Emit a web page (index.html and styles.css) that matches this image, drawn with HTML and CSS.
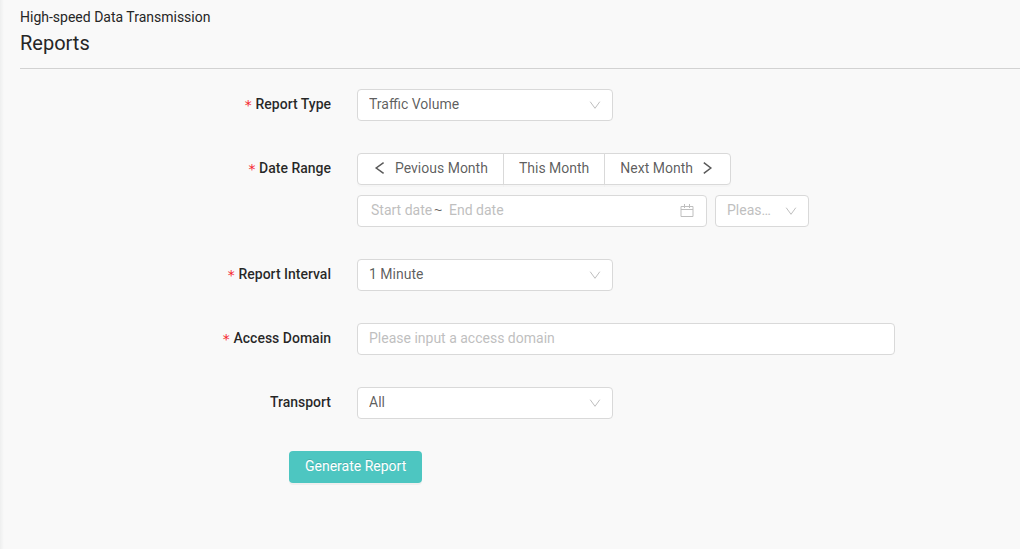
FILE: index.html
```html
<!DOCTYPE html>
<html lang="en">
<head>
<meta charset="utf-8">
<meta name="viewport" content="width=device-width, initial-scale=1">
<title>Reports</title>
<link rel="stylesheet" href="styles.css">
</head>
<body>
<main class="page">
  <header class="page-header">
    <p class="section">High-speed Data Transmission</p>
    <h1 class="title">Reports</h1>
  </header>
  <form class="form">
    <div class="row">
      <label class="label required" for="type">Report Type</label>
      <div class="field">
        <div class="select">
          <select id="type" class="control"><option>Traffic Volume</option></select>
          <svg class="arrow" viewBox="0 0 12 12" aria-hidden="true"><path d="M1.2 1.7 6 8.3l4.8-6.6"/></svg>
        </div>
      </div>
    </div>
    <div class="row">
      <label class="label required" for="start">Date Range</label>
      <div class="field date-field">
        <div class="months">
          <button type="button" class="month"><svg class="chevron" viewBox="0 0 14 14" aria-hidden="true"><path d="M10.6 1.6 3.2 7l7.4 5.4"/></svg>Pevious Month</button>
          <button type="button" class="month">This Month</button>
          <button type="button" class="month">Next Month<svg class="chevron" viewBox="0 0 14 14" aria-hidden="true"><path d="M2.8 1.6 9.8 7l-7 5.4"/></svg></button>
        </div>
        <div class="range-row">
          <div class="control range">
            <input id="start" class="date start" type="text" placeholder="Start date">
            <span class="tilde">~</span>
            <input class="date end" type="text" placeholder="End date" aria-label="End date">
            <svg class="calendar" viewBox="0 0 14 14" aria-hidden="true"><path d="M1 3.5h12v10H1zM1 6.5h12M4.5 1v4M9.5 1v4"/></svg>
          </div>
          <div class="select small">
            <select class="control placeholder" aria-label="Time zone"><option>Please select</option></select>
            <svg class="arrow" viewBox="0 0 12 12" aria-hidden="true"><path d="M1.2 1.7 6 8.3l4.8-6.6"/></svg>
          </div>
        </div>
      </div>
    </div>
    <div class="row">
      <label class="label required" for="interval">Report Interval</label>
      <div class="field">
        <div class="select">
          <select id="interval" class="control"><option>1 Minute</option></select>
          <svg class="arrow" viewBox="0 0 12 12" aria-hidden="true"><path d="M1.2 1.7 6 8.3l4.8-6.6"/></svg>
        </div>
      </div>
    </div>
    <div class="row">
      <label class="label required" for="domain">Access Domain</label>
      <div class="field"><input id="domain" class="control" type="text" placeholder="Please input a access domain"></div>
    </div>
    <div class="row">
      <label class="label" for="transport">Transport</label>
      <div class="field">
        <div class="select">
          <select id="transport" class="control"><option>All</option></select>
          <svg class="arrow" viewBox="0 0 12 12" aria-hidden="true"><path d="M1.2 1.7 6 8.3l4.8-6.6"/></svg>
        </div>
      </div>
    </div>
    <div class="actions"><button type="submit" class="submit">Generate Report</button></div>
  </form>
</main>
</body>
</html>
```

FILE: styles.css
```css
* { box-sizing: border-box; }
body {
  margin: 0;
  background: #f9f9f9;
  color: rgba(0, 0, 0, 0.65);
  font: 14px/20px Roboto, "Liberation Sans", sans-serif;
}
.page {
  min-height: 100vh;
  padding: 7px 0 32px 20px;
  background: linear-gradient(to right, #eeefef, #f9f9f9 4px);
}
.page-header {
  padding-bottom: 8px;
  border-bottom: 1px solid #d2d2d2;
  color: #262626;
}
.section { margin: 0; }
.title { margin: 0; font-size: 20px; font-weight: 400; line-height: 33px; }
.form { display: grid; gap: 32px; padding-top: 20px; }
.row { display: grid; grid-template-columns: 337fr 538fr 125fr; }
.label {
  padding-right: 26px;
  color: rgba(0, 0, 0, 0.85);
  font-weight: 500;
  line-height: 30px;
  text-align: right;
}
.required::before {
  content: "*";
  display: inline-block;
  margin-right: 3px;
  color: #f5222d;
  font: 14px/16px "DejaVu Sans Mono", monospace;
  vertical-align: -1px;
}
.control {
  display: block;
  width: 100%;
  height: 32px;
  margin: 0;
  padding: 0 11px 2px;
  border: 1px solid #d9d9d9;
  border-radius: 4px;
  background: #fff;
  color: rgba(0, 0, 0, 0.65);
  font: inherit;
  appearance: none;
}
::placeholder { color: #bfbfbf; opacity: 1; }
.select { position: relative; width: 256px; max-width: 100%; }
.select .control { padding-right: 36px; text-overflow: ellipsis; }
.select .placeholder { color: #bfbfbf; }
.small { width: 94px; }
.arrow {
  position: absolute;
  top: 11px;
  right: 12px;
  width: 12px;
  height: 12px;
  fill: none;
  stroke: #bfbfbf;
  pointer-events: none;
}
.date-field { display: grid; gap: 10px; }
.months { display: flex; }
.month {
  display: flex;
  align-items: center;
  gap: 8px;
  height: 32px;
  margin: 0 0 0 -1px;
  padding: 0 15px 2px;
  border: 1px solid #d9d9d9;
  background: #fff;
  box-shadow: 0 2px 0 rgba(0, 0, 0, 0.016);
  color: rgba(0, 0, 0, 0.65);
  font: inherit;
  white-space: nowrap;
}
.month:first-child { margin-left: 0; border-radius: 4px 0 0 4px; }
.month:last-child { border-radius: 0 4px 4px 0; }
.chevron { width: 14px; height: 14px; fill: none; stroke: #595959; stroke-width: 1.5; }
.range-row { display: flex; gap: 8px; }
.range { display: flex; align-items: center; width: 350px; padding: 0 12px 2px 13px; }
.date { height: 20px; margin: 0; padding: 0; border: 0; background: none; font: inherit; }
.start { width: 63px; }
.tilde { width: 15px; font-family: "Liberation Sans", sans-serif; }
.end { flex: 1; min-width: 0; }
.calendar { width: 14px; height: 14px; fill: none; stroke: #bfbfbf; }
.actions { padding-left: 26.9%; }
.submit {
  height: 32px;
  padding: 0 16px 2px;
  border: 0;
  border-radius: 4px;
  background: #4dc6c1;
  box-shadow: 0 2px 0 rgba(0, 0, 0, 0.04);
  color: #fff;
  font: inherit;
  text-shadow: 0 -1px 0 rgba(0, 0, 0, 0.12);
}
```
